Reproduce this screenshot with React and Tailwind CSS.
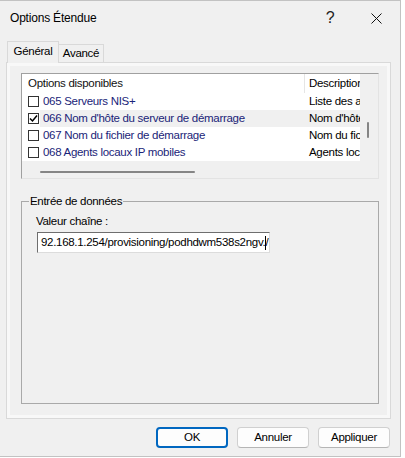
const ROWS = [
  { label: '065 Serveurs NIS+', desc: 'Liste des a', checked: false },
  { label: "066 Nom d'hôte du serveur de démarrage", desc: "Nom d'hôte", checked: true, selected: true },
  { label: '067 Nom du fichier de démarrage', desc: 'Nom du fichier', checked: false },
  { label: '068 Agents locaux IP mobiles', desc: 'Agents locaux', checked: false },
]

function Checkbox({ checked }) {
  return (
    <div className="w-[11px] h-[11px] border border-[#333] bg-white flex items-center justify-center">
      {checked && (
        <svg width="9" height="9" viewBox="0 0 9 9">
          <path d="M1 4.5 L3.5 7 L8 1.5" fill="none" stroke="#000" strokeWidth="1.5" />
        </svg>
      )}
    </div>
  )
}

function Button({ children, primary }) {
  return (
    <button
      className={
        'w-[72px] h-[21px] rounded-[4px] bg-[#fdfdfd] leading-none ' +
        (primary ? 'border-2 border-[#0067c0]' : 'border border-[#d0d0d0] border-b-[#b5b5b5]')
      }
    >
      {children}
    </button>
  )
}

export default function App() {
  return (
    <div className="w-[401px] h-[457px] bg-[#f0f0f0] border-t border-r border-b border-[#c2c2c2] flex flex-col font-['Liberation_Sans',Arial,sans-serif] text-[11.5px] tracking-[-0.3px] text-black">
      {/* ── Title bar ─────────────────────────────────────────── */}
      <div className="h-[34px] flex items-center pl-[10px]">
        <span className="text-[12px] tracking-[-0.2px]">Options Étendue</span>
        <span className="ml-auto w-[46px] text-center text-[16px] font-light text-[#222]">?</span>
        <div className="w-[47px] flex items-center justify-center">
          <svg width="11" height="11" viewBox="0 0 11 11">
            <path d="M0.5 0.5 L10.5 10.5 M10.5 0.5 L0.5 10.5" stroke="#111" strokeWidth="1" />
          </svg>
        </div>
      </div>

      {/* ── Tabs ──────────────────────────────────────────────── */}
      <div className="mt-[6px] h-[21px] flex items-end pl-[7px]">
        <div className="relative z-10 -mb-px h-[22px] w-[52px] bg-[#f0f0f0] border border-b-0 border-[#d9d9d9] flex items-center justify-center pb-[1px]">
          Général
        </div>
        <div className="h-[18px] w-[45px] bg-[#f0f0f0] border border-l-0 border-b-0 border-[#d9d9d9] flex items-center justify-center">
          Avancé
        </div>
      </div>

      {/* ── Tab panel ─────────────────────────────────────────── */}
      <div className="ml-[6px] w-[385px] h-[357px] border border-[#d9d9d9]">
        <div className="h-full border-[3px] border-[#f8f8f8] bg-[#f0f0f0] pl-[11px] pt-[7px]">

          {/* Options list */}
          <div className="w-[358px] h-[106px] border border-t-[#a0a0a0] border-l-[#a0a0a0] border-r-[#e3e3e3] border-b-[#e3e3e3] flex">
            <div className="w-[338px] flex flex-col">
              <div className="h-[19px] bg-white flex items-center leading-none">
                <div className="w-[283px] pl-[6px] border-r border-[#e5e5e5] h-full flex items-center text-[#111]">
                  Options disponibles
                </div>
                <div className="flex-1 pl-[4px] overflow-hidden whitespace-nowrap">Description</div>
              </div>
              {ROWS.map(row => (
                <div key={row.label} className="h-[17px] bg-white flex items-center leading-none">
                  <div className="w-[18px] pl-[6px] flex items-center">
                    <Checkbox checked={row.checked} />
                  </div>
                  <div className={'flex-1 h-full flex items-center ' + (row.selected ? 'bg-[#f0f0f0]' : '')}>
                    <div className="w-[265px] pl-[3px] text-[#1a2478] whitespace-nowrap">{row.label}</div>
                    <div className="w-[55px] pl-[4px] overflow-hidden whitespace-nowrap">{row.desc}</div>
                  </div>
                </div>
              ))}
              {/* horizontal scrollbar */}
              <div className="flex-1 pt-[10px] pl-[18px]">
                <div className="w-[155px] h-[2px] bg-[#858585] rounded-full" />
              </div>
            </div>
            {/* vertical scrollbar */}
            <div className="flex-1 pl-[7px] pt-[48px]">
              <div className="w-[2px] h-[16px] bg-[#858585] rounded-full" />
            </div>
          </div>

          {/* Data entry group */}
          <fieldset className="mt-[15px] w-[358px] h-[210px] border border-[#a9a9a9]">
            <legend className="ml-[7px] px-[1px] leading-[14px]">Entrée de données</legend>
            <div className="mt-[6px] pl-[14px] leading-[14px]">Valeur chaîne :</div>
            <div className="mt-[4px] ml-[15px] w-[233px] h-[21px] bg-white border border-t-[#6e6e6e] border-l-[#6e6e6e] border-r-[#dcdcdc] border-b-[#dcdcdc] flex items-center pl-[3px] overflow-hidden whitespace-nowrap">
              92.168.1.254/provisioning/podhdwm538s2ngv./
              <span className="w-px h-[14px] bg-black -ml-[3px]" />
            </div>
          </fieldset>
        </div>
      </div>

      {/* ── Buttons ───────────────────────────────────────────── */}
      <div className="mt-[8px] flex justify-end gap-[9px] pr-[10px]">
        <Button primary>OK</Button>
        <Button>Annuler</Button>
        <Button>Appliquer</Button>
      </div>
    </div>
  )
}
